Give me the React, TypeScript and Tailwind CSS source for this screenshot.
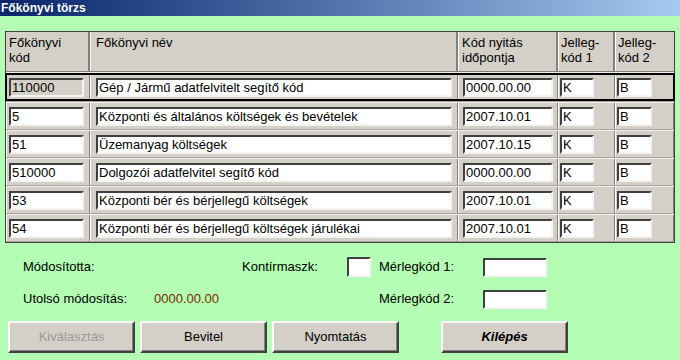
import React from "react"

type Row = { kod: string; nev: string; datum: string; j1: string; j2: string }

const rows: Row[] = [
  { kod: "110000", nev: "Gép / Jármű adatfelvitelt segítő kód", datum: "0000.00.00", j1: "K", j2: "B" },
  { kod: "5", nev: "Központi és általános költségek és bevételek", datum: "2007.10.01", j1: "K", j2: "B" },
  { kod: "51", nev: "Üzemanyag költségek", datum: "2007.10.15", j1: "K", j2: "B" },
  { kod: "510000", nev: "Dolgozói adatfelvitel segítő kód", datum: "0000.00.00", j1: "K", j2: "B" },
  { kod: "53", nev: "Központi bér és bérjellegű költségek", datum: "2007.10.01", j1: "K", j2: "B" },
  { kod: "54", nev: "Központi bér és bérjellegű költségek járulékai", datum: "2007.10.01", j1: "K", j2: "B" },
]

// classic sunken edit box
function Field({ value, className, gray }: { value: string; className: string; gray?: boolean }) {
  return (
    <div
      className={
        "h-[19px] border-2 border-t-[#404040] border-l-[#404040] border-b-[#f4f4f4] border-r-[#f4f4f4] flex items-center pl-px text-[13px] leading-none text-black whitespace-nowrap overflow-hidden " +
        (gray ? "bg-[#d4d0c8] " : "bg-white ") +
        className
      }
    >
      {value}
    </div>
  )
}

function Cell({ w, children, pl }: { w: string; children?: React.ReactNode; pl: string }) {
  return (
    <div className={"h-full flex items-center border-l border-l-white border-r border-r-[#808080] " + w + " " + pl}>
      {children}
    </div>
  )
}

function Btn({ label, className }: { label: string; className?: string }) {
  return (
    <button
      className={
        "w-[127px] h-[32px] bg-[#d4d0c8] border-2 border-t-white border-l-white border-b-[#404040] border-r-[#404040] text-[13px] shadow-[inset_-1px_-1px_0_#808080] " +
        (className ?? "text-black")
      }
    >
      {label}
    </button>
  )
}

export default function App() {
  return (
    <div className="w-[680px] h-[360px] bg-[#b4fdb4] font-['Liberation_Sans',Arial,sans-serif] overflow-hidden">
      {/* title bar */}
      <div className="h-[16px] bg-linear-to-r from-[#0a246a] to-[#a6caf0] flex items-center pl-[1px]">
        <span className="text-white font-bold text-[12px] leading-none">Főkönyvi törzs</span>
      </div>

      {/* grid */}
      <div className="ml-[5px] mt-[15px] w-[670px] border border-[#404040] bg-[#d4d0c8]">
        <div className="flex h-[40px] border-b border-b-[#808080] text-[13px] leading-[15px] text-black">
          <div className="w-[84px] pl-[3px] pt-[3px] border-r-2 border-r-[#808080]">Főkönyvi<br />kód</div>
          <div className="w-[368px] pl-[5px] pt-[3px] border-l border-l-white border-r-2 border-r-[#808080]">Főkönyvi név</div>
          <div className="w-[100px] pl-[3px] pt-[3px] border-l border-l-white border-r-2 border-r-[#808080]">Kód nyitás<br />időpontja</div>
          <div className="w-[57px] pl-[2px] pt-[3px] border-l border-l-white border-r-2 border-r-[#808080]">Jelleg-<br />kód 1</div>
          <div className="w-[59px] pl-[2px] pt-[3px] border-l border-l-white">Jelleg-<br />kód 2</div>
        </div>
        {rows.map((r, i) => (
          <div
            key={i}
            className={"relative flex border-b border-b-[#a8a49c] border-t border-t-[#f0f0f0] " + (i === 0 ? "h-[30px]" : "h-[28px]")}
          >
            <Cell w="w-[84px]" pl="pl-[2px]">
              <Field value={r.kod} className="w-[75px]" gray={i === 0} />
            </Cell>
            <Cell w="w-[368px]" pl="pl-[5px]">
              <Field value={r.nev} className="w-[356px]" />
            </Cell>
            <Cell w="w-[100px]" pl="pl-[4px]">
              <Field value={r.datum} className="w-[90px]" />
            </Cell>
            <Cell w="w-[57px]" pl="pl-[1px]">
              <Field value={r.j1} className="w-[34px]" />
            </Cell>
            <Cell w="w-[59px]" pl="pl-[1px]">
              <Field value={r.j2} className="w-[35px]" />
            </Cell>
            {i === 0 && <div className="absolute -inset-x-px inset-y-0 border-2 border-black pointer-events-none" />}
          </div>
        ))}
      </div>

      {/* info area */}
      <div className="pl-[23px] text-[13px] text-black">
        <div className="mt-[14px] h-[20px] flex items-center">
          <span className="w-[219px]">Módosította:</span>
          <span className="w-[105px]">Kontírmaszk:</span>
          <Field value="" className="w-[24px] !h-[20px]" />
          <span className="ml-[8px] w-[104px]">Mérlegkód 1:</span>
          <Field value="" className="w-[64px]" />
        </div>
        <div className="mt-[12px] h-[20px] flex items-center">
          <span className="w-[131px]">Utolsó módosítás:</span>
          <span className="w-[225px] text-[#7a2a00]">0000.00.00</span>
          <span className="w-[104px]">Mérlegkód 2:</span>
          <Field value="" className="w-[64px]" />
        </div>
      </div>

      {/* buttons */}
      <div className="mt-[12px] pl-[8px] flex">
        <Btn label="Kiválasztás" className="text-[#9a9a9a]" />
        <div className="ml-[5px]"><Btn label="Bevitel" /></div>
        <div className="ml-[5px]"><Btn label="Nyomtatás" /></div>
        <div className="ml-[42px]"><Btn label="Kilépés" className="text-black font-bold italic" /></div>
      </div>
    </div>
  )
}
